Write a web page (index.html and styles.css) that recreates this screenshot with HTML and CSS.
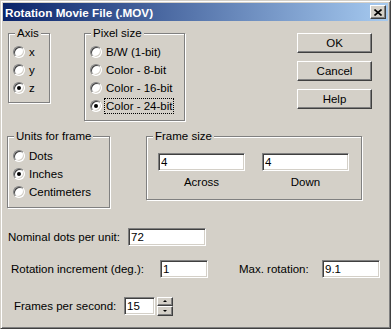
FILE: index.html
```html
<!DOCTYPE html>
<html lang="en">
<head>
    <meta charset="UTF-8">
    <title>Rotation Movie File (.MOV)</title>
    <link rel="stylesheet" href="styles.css">
</head>
<body>
    <div class="window">
        <div class="titlebar">
            <span class="title">Rotation Movie File (.MOV)</span>
            <button class="close-btn" aria-label="Close">
                <svg width="8" height="7" viewBox="0 0 8 7">
                    <path d="M0.5 0.5 L7.5 6.5 M7.5 0.5 L0.5 6.5" stroke="#000" stroke-width="1.6" fill="none"/>
                </svg>
            </button>
        </div>

        <div class="client">
            <div class="top-row">
                <fieldset class="group axis-group">
                    <legend>Axis</legend>
                    <div class="group-body">
                        <label class="radio"><span class="radio-mark"></span>x</label>
                        <label class="radio"><span class="radio-mark"></span>y</label>
                        <label class="radio"><span class="radio-mark checked"></span>z</label>
                    </div>
                </fieldset>

                <fieldset class="group pixel-group">
                    <legend>Pixel size</legend>
                    <div class="group-body">
                        <label class="radio"><span class="radio-mark"></span>B/W (1-bit)</label>
                        <label class="radio"><span class="radio-mark"></span>Color - 8-bit</label>
                        <label class="radio"><span class="radio-mark"></span>Color - 16-bit</label>
                        <label class="radio"><span class="radio-mark checked"></span><span class="focus">Color - 24-bit</span></label>
                    </div>
                </fieldset>

                <div class="buttons">
                    <button class="btn">OK</button>
                    <button class="btn">Cancel</button>
                    <button class="btn">Help</button>
                </div>
            </div>

            <div class="mid-row">
                <fieldset class="group units-group">
                    <legend>Units for frame</legend>
                    <div class="group-body">
                        <label class="radio"><span class="radio-mark"></span>Dots</label>
                        <label class="radio"><span class="radio-mark checked"></span>Inches</label>
                        <label class="radio"><span class="radio-mark"></span>Centimeters</label>
                    </div>
                </fieldset>

                <fieldset class="group frame-group">
                    <legend>Frame size</legend>
                    <div class="frame-body">
                        <div class="frame-col">
                            <input type="text" class="field frame-field" value="4">
                            <span class="caption">Across</span>
                        </div>
                        <div class="frame-col">
                            <input type="text" class="field frame-field" value="4">
                            <span class="caption">Down</span>
                        </div>
                    </div>
                </fieldset>
            </div>

            <div class="field-row row-dots">
                <span class="field-label dots-label">Nominal dots per unit:</span>
                <input type="text" class="field dots-field" value="72">
            </div>

            <div class="field-row row-rotation">
                <span class="field-label incr-label">Rotation increment (deg.):</span>
                <input type="text" class="field incr-field" value="1">
                <span class="field-label max-label">Max. rotation:</span>
                <input type="text" class="field max-field" value="9.1">
            </div>

            <div class="field-row row-fps">
                <span class="field-label fps-label">Frames per second:</span>
                <input type="text" class="field fps-field" value="15">
                <div class="spinner">
                    <button class="spin spin-up"></button>
                    <button class="spin spin-down"></button>
                </div>
            </div>
        </div>
    </div>
</body>
</html>
```

FILE: styles.css
```css
body {
    margin: 0;
    font-family: "Liberation Sans", Arial, sans-serif;
    font-size: 11.5px;
    color: #000;
    background-color: #d4d0c8;
}
.window {
    box-sizing: border-box;
    width: 391px;
    height: 329px;
    padding: 2px;
    background-color: #d4d0c8;
    border: 1px solid;
    border-color: #d4d0c8 #404040 #404040 #d4d0c8;
    box-shadow: inset 1px 1px 0 #fff, inset -1px -1px 0 #808080;
}
.titlebar {
    display: flex;
    align-items: center;
    justify-content: space-between;
    height: 18px;
    padding: 0 2px;
    background: linear-gradient(to right, #0a246a, #a6caf0);
}
.title {
    color: #fff;
    font-weight: bold;
    font-size: 11.7px;
}
.close-btn {
    box-sizing: border-box;
    display: flex;
    align-items: center;
    justify-content: center;
    width: 16px;
    height: 14px;
    padding: 0;
    background-color: #d4d0c8;
    border: 1px solid;
    border-color: #fff #404040 #404040 #fff;
    box-shadow: inset -1px -1px 0 #808080;
}
.client {
    padding-top: 5px;
}
.top-row,
.mid-row {
    display: flex;
    align-items: flex-start;
}

/* group boxes */
.group {
    box-sizing: border-box;
    margin: 0;
    padding: 0;
    min-width: 0;
    border: 1px solid #808080;
    box-shadow: 1px 1px 0 #fff, inset 1px 1px 0 #fff;
}
.group legend {
    margin-left: 6px;
    padding: 0 2px;
    line-height: 14px;
    background-color: #d4d0c8;
}
.axis-group {
    margin-left: 5px;
    width: 42px;
    height: 77px;
}
.axis-group .group-body {
    padding: 3px 0 0 4px;
}
.pixel-group {
    margin-left: 34px;
    width: 101px;
    height: 95px;
}
.pixel-group .group-body {
    padding: 3px 0 0 5px;
}
.units-group {
    margin-left: 4px;
    width: 103px;
    height: 79px;
}
.units-group .group-body {
    padding: 4px 0 0 5px;
}
.frame-group {
    margin-left: 36px;
    width: 216px;
    height: 71px;
}

/* radio buttons */
.radio {
    display: flex;
    align-items: center;
    height: 18px;
    white-space: nowrap;
}
.radio-mark {
    box-sizing: border-box;
    display: flex;
    align-items: center;
    justify-content: center;
    flex: none;
    width: 12px;
    height: 12px;
    margin-right: 4px;
    border-radius: 50%;
    border: 1px solid;
    border-color: #808080 #fff #fff #808080;
    box-shadow: inset 1px 1px 0 #404040, inset -1px -1px 0 #d4d0c8;
    background-color: #fff;
}
.radio-mark.checked::after {
    content: "";
    width: 4px;
    height: 4px;
    border-radius: 50%;
    background-color: #000;
}
.focus {
    margin-left: -2px;
    padding: 0 1px;
    line-height: 14px;
    border: 1px dotted #000;
}

/* push buttons */
.buttons {
    display: flex;
    flex-direction: column;
    gap: 8px;
    margin: 7px 0 0 112px;
}
.btn {
    box-sizing: border-box;
    width: 75px;
    height: 20px;
    padding: 0;
    font: inherit;
    color: #000;
    background-color: #d4d0c8;
    border: 1px solid;
    border-color: #fff #404040 #404040 #fff;
    box-shadow: inset -1px -1px 0 #808080;
}

/* edit fields */
.field {
    box-sizing: border-box;
    height: 18px;
    margin: 0;
    padding: 0 2px;
    font: inherit;
    color: #000;
    background-color: #fff;
    border: 1px solid;
    border-color: #808080 #fff #fff #808080;
    box-shadow: inset 1px 1px 0 #404040, inset -1px -1px 0 #d4d0c8;
    outline: none;
}
.frame-body {
    display: flex;
    gap: 17px;
    padding: 10px 0 0 11px;
}
.frame-col {
    display: flex;
    flex-direction: column;
    align-items: center;
}
.frame-field {
    width: 87px;
}
.caption {
    margin-top: 4px;
    line-height: 14px;
}
.mid-row {
    margin-top: 8px;
}
.field-row {
    display: flex;
    align-items: center;
    height: 18px;
}
.field-label {
    flex: none;
    white-space: nowrap;
}
.row-dots {
    margin: 20px 0 0 5px;
}
.dots-label {
    width: 120px;
}
.dots-field {
    width: 78px;
}
.row-rotation {
    margin: 14px 0 0 8px;
}
.incr-label {
    width: 149px;
}
.incr-field {
    width: 48px;
}
.max-label {
    width: 83px;
    margin-left: 31px;
}
.max-field {
    width: 58px;
}
.row-fps {
    margin: 19px 0 0 11px;
}
.fps-label {
    width: 110px;
}
.fps-field {
    width: 31px;
}
.spinner {
    display: flex;
    flex-direction: column;
    margin-left: 2px;
}
.spin {
    box-sizing: border-box;
    display: flex;
    align-items: center;
    justify-content: center;
    width: 16px;
    height: 9px;
    padding: 0;
    background-color: #d4d0c8;
    border: 1px solid;
    border-color: #fff #404040 #404040 #fff;
    box-shadow: inset -1px -1px 0 #808080;
}
.spin-down {
    height: 10px;
}
.spin::after {
    content: "";
    border-left: 2px solid transparent;
    border-right: 2px solid transparent;
}
.spin-up::after {
    border-bottom: 2px solid #000;
}
.spin-down::after {
    border-top: 2px solid #000;
}
```
